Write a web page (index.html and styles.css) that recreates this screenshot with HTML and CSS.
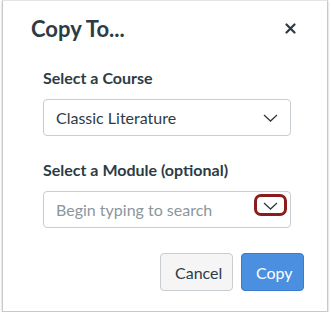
FILE: index.html
```html
<!DOCTYPE html>
<html>
<head>
<meta charset="utf-8">
<link rel="stylesheet" href="styles.css">
</head>
<body>
<div class="dialog">
  <div class="header">
    <h1 class="title">Copy To...</h1>
    <button class="close" aria-label="Close">
      <svg width="11" height="11" viewBox="0 0 11 11"><path d="M1.5 1.5 L9.5 9.5 M9.5 1.5 L1.5 9.5" stroke="#2d3b45" stroke-width="2.2" stroke-linecap="round"/></svg>
    </button>
  </div>
  <div class="body">
    <label class="label">Select a Course</label>
    <div class="field">
      <span class="value">Classic Literature</span>
      <svg class="chev" width="15" height="8" viewBox="0 0 15 8"><path d="M1 1 L7.5 7 L14 1" fill="none" stroke="#2d3b45" stroke-width="1.3"/></svg>
    </div>
    <label class="label label2">Select a Module (optional)</label>
    <div class="field">
      <span class="placeholder">Begin typing to search</span>
      <span class="hl">
        <svg class="chev" width="15" height="8" viewBox="0 0 15 8"><path d="M1 1 L7.5 7 L14 1" fill="none" stroke="#2d3b45" stroke-width="1.3"/></svg>
      </span>
    </div>
  </div>
  <div class="footer">
    <button class="btn cancel">Cancel</button>
    <button class="btn primary">Copy</button>
  </div>
</div>
</body>
</html>
```
FILE: styles.css
```css
html, body {
  margin: 0;
  padding: 0;
  background: #fff;
}
body {
  font-family: Lato, "Noto Sans", sans-serif;
  color: #2d3b45;
}
.dialog {
  margin-left: 2px;
  width: 326px;
  height: 312px;
  box-sizing: border-box;
  border: 1px solid #c9c9c9;
  border-top-color: #e4e4e4;
  box-shadow: 0 1px 2px rgba(0,0,0,0.25);
  display: flex;
  flex-direction: column;
}
.header {
  display: flex;
  align-items: center;
  justify-content: space-between;
  padding: 15px 29px 0 28px;
}
.title {
  margin: 0;
  font-size: 22px;
  font-weight: 700;
  line-height: 25px;
}
.close {
  border: 0;
  background: none;
  padding: 0;
  width: 11px;
  height: 11px;
  margin-right: 2px;
  display: flex;
}
.body {
  padding: 27px 36px 0 40px;
  display: flex;
  flex-direction: column;
}
.label {
  font-size: 16px;
  font-weight: 700;
  line-height: 19px;
  margin-bottom: 12px;
}
.label2 {
  margin-top: 24px;
}
.field {
  height: 37px;
  box-sizing: border-box;
  border: 1px solid #c7cdd1;
  border-radius: 4px;
  display: flex;
  align-items: center;
  justify-content: space-between;
  padding: 0 12px 0 12px;
  font-size: 16px;
  position: relative;
}
.value {
  color: #2d3b45;
}
.placeholder {
  color: #8b969e;
}
.chev {
  display: block;
}
.hl {
  position: absolute;
  right: 3px;
  top: 2px;
  width: 33px;
  height: 22px;
  box-sizing: border-box;
  border: 3px solid #8a1c1c;
  border-radius: 7px;
  display: flex;
  align-items: center;
  justify-content: center;
  padding-top: 1px;
}
.footer {
  display: flex;
  justify-content: flex-end;
  gap: 8px;
  padding: 25px 23px 0 0;
}
.btn {
  font-family: Lato, "Noto Sans", sans-serif;
  font-size: 16px;
  height: 38px;
  border-radius: 4px;
  box-sizing: border-box;
  padding: 0 14px;
}
.cancel {
  background: #f5f5f5;
  border: 1px solid #c7cdd1;
  color: #2d3b45;
  width: 73px;
}
.primary {
  background: #4a8fe0;
  border: 1px solid #3a7ccb;
  color: #fff;
  width: 63px;
}
```
